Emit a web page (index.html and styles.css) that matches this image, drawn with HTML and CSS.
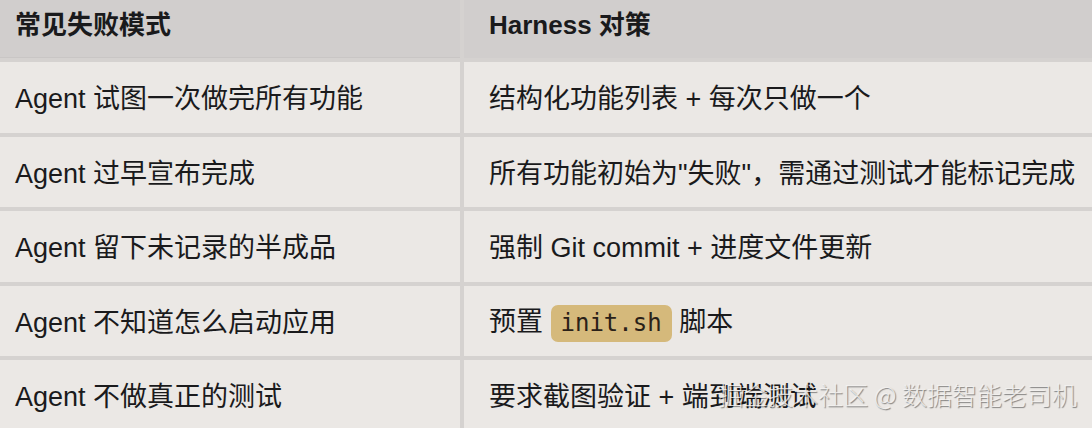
FILE: index.html
```html
<!DOCTYPE html>
<html lang="zh-CN">
<head>
<meta charset="utf-8">
<title>Harness 对策</title>
<link rel="stylesheet" href="styles.css">
</head>
<body>
<div class="page">
  <div class="table">
    <div class="cell head first"><span>常见失败模式</span></div>
    <div class="cell head second"><span>Harness 对策</span></div>

    <div class="cell first"><span>Agent 试图一次做完所有功能</span></div>
    <div class="cell second"><span>结构化功能列表 + 每次只做一个</span></div>

    <div class="cell first"><span>Agent 过早宣布完成</span></div>
    <div class="cell second"><span>所有功能初始为"失败"，需通过测试才能标记完成</span></div>

    <div class="cell first"><span>Agent 留下未记录的半成品</span></div>
    <div class="cell second"><span>强制 Git commit + 进度文件更新</span></div>

    <div class="cell first"><span>Agent 不知道怎么启动应用</span></div>
    <div class="cell second"><span>预置 <code class="code">init.sh</code> 脚本</span></div>

    <div class="cell first"><span>Agent 不做真正的测试</span></div>
    <div class="cell second"><span>要求截图验证 + 端到端测试</span></div>
  </div>
  <div class="watermark">掘金技术社区 @ 数据智能老司机</div>
</div>
</body>
</html>
```

FILE: styles.css
```css
html, body {
  margin: 0;
  padding: 0;
}

body {
  width: 1092px;
  height: 428px;
  overflow: hidden;
  background: #ebe8e5;
  font-family: "Liberation Sans", "Noto Sans CJK SC", sans-serif;
  color: #1a1a1c;
}

.page {
  position: relative;
  width: 1092px;
  height: 428px;
  overflow: hidden;
}

.table {
  display: grid;
  grid-template-columns: 460px 1fr;
  grid-template-rows: 58px repeat(5, 70.5px);
  column-gap: 4px;
  row-gap: 4px;
  background: #d5d2d0;
}

.cell {
  display: flex;
  align-items: center;
  background: #ebe8e5;
  font-size: 27px;
  line-height: 36px;
  padding-top: 4px;
  white-space: nowrap;
}

.cell.first {
  padding-left: 15px;
}

.cell.second {
  padding-left: 25px;
}

.cell.head {
  background: #d1cecd;
  font-weight: 600;
  font-size: 26px;
  padding-top: 0;
  padding-bottom: 8px;
}

.table .head.first {
  box-shadow: inset 0 -1px 0 #c9c6c5;
}

.code {
  display: inline-block;
  font-family: "DejaVu Sans Mono", monospace;
  font-size: 24px;
  line-height: 31px;
  padding: 3px 10px;
  border-radius: 7px;
  background: #d5b97b;
  color: #2a2118;
}

.watermark {
  position: absolute;
  right: 15px;
  top: 376px;
  font-family: "Noto Sans CJK SC", sans-serif;
  font-weight: 300;
  font-size: 25px;
  line-height: 36px;
  color: rgba(248, 246, 244, 0.8);
  text-shadow: 1px 1px 1px rgba(0, 0, 0, 0.45);
  white-space: nowrap;
}
```
